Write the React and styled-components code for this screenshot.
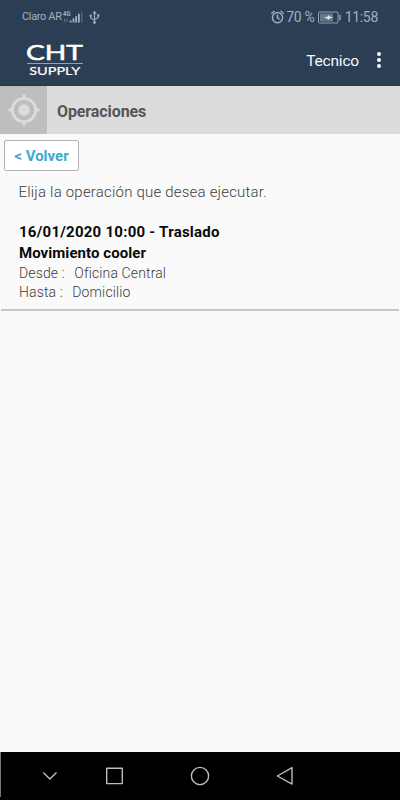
import React from 'react';
import styled, { createGlobalStyle } from 'styled-components';

const GlobalStyle = createGlobalStyle`
  * {
    box-sizing: border-box;
  }

  body {
    margin: 0;
    background: #fafafa;
    font-family: Roboto, sans-serif;
  }
`;

const Screen = styled.div`
  display: flex;
  flex-direction: column;
  width: 400px;
  height: 800px;
  overflow: hidden;
  background: #fafafa;
`;

const Header = styled.header`
  height: 86px;
  background: #2c3e54;
  border-bottom: 1px solid #24344a;
`;

const StatusBar = styled.div`
  display: flex;
  justify-content: space-between;
  height: 34px;
  padding: 0 22px;
  color: #a3b0be;
`;

const StatusGroup = styled.div`
  display: flex;
  align-items: center;
`;

const StatusText = styled.span`
  font-size: ${({ size }) => size}px;
  line-height: 34px;
  letter-spacing: ${({ spacing }) => spacing || 0}px;
  margin-left: ${({ gap }) => gap || 0}px;
  white-space: nowrap;
`;

const Toolbar = styled.div`
  display: flex;
  align-items: center;
  justify-content: space-between;
  height: 52px;
  padding: 0 17px 0 26px;
`;

const ToolbarActions = styled.div`
  display: flex;
  align-items: center;
`;

const UserName = styled.span`
  color: #f5f8fb;
  font-size: 15.5px;
  line-height: 20px;
  letter-spacing: -0.2px;
  padding-top: 1px;
  margin-right: 16px;
`;

const TitleBar = styled.div`
  display: flex;
  align-items: center;
  height: 48px;
  background: #dcdcdc;
`;

const TitleIcon = styled.div`
  display: flex;
  align-items: center;
  justify-content: center;
  width: 47px;
  height: 48px;
  background: #bebebe;
`;

const Title = styled.h1`
  margin: 2px 0 0 10px;
  color: #555;
  font-size: 16px;
  font-weight: 700;
  letter-spacing: -0.1px;
`;

const Main = styled.main`
  flex: 1;
  padding-top: 6px;
`;

const BackButton = styled.button`
  display: block;
  width: 75px;
  height: 31px;
  margin-left: 4px;
  padding: 1px 0 0;
  border: 1px solid #b2b2b6;
  border-radius: 2px;
  background: #fff;
  color: #3ea9cc;
  font-family: inherit;
  font-size: 15px;
  font-weight: 700;
  white-space: nowrap;
`;

const Intro = styled.p`
  margin: 11px 0 0 18.5px;
  color: #3c3c3c;
  font-size: 15px;
  font-weight: 300;
  line-height: 20px;
  letter-spacing: 0.2px;
`;

const Operation = styled.article`
  height: 109px;
  margin: 0 1px;
  padding: 20px 0 0 18px;
  border-bottom: 2px solid #c6c6d0;
`;

const OperationTitle = styled.h2`
  margin: 0;
  color: #0a0a0a;
  font-size: 15px;
  font-weight: 700;
  line-height: 21px;
  letter-spacing: ${({ spacing }) => spacing}px;
`;

const OperationDetail = styled.div`
  color: #3c3c3c;
  font-size: 14px;
  font-weight: 300;
  line-height: 19px;
  letter-spacing: 0.13px;
`;

const DetailValue = styled.span`
  margin-left: 9.5px;
`;

const NavBar = styled.nav`
  height: 48px;
  background: #000;
`;

const LogoDrawing = styled.svg`
  overflow: visible;
`;

const SignalIcon = () => (
  <svg width='22' height='16' viewBox='0 0 22 16' fill='#a3b0be'>
    <text
      x='1'
      y='7'
      fontSize='8'
      fontWeight='700'
      fontFamily='Roboto'
      textLength='7.4'
      lengthAdjust='spacingAndGlyphs'
    >
      4G
    </text>
    <path d='M2.5 9.5V13M5 9.5V13' stroke='#64758a' strokeWidth='1' />
    <path d='M7.7 11.6h1.8v2H7.7zM10.6 9.6h1.8v4h-1.8zM13.3 7.3h1.8v6.3h-1.8zM16 4.8h1.8v8.8H16z' />
    <path d='M19 2.4h1.5v11.2H19z' fill='#52657b' />
  </svg>
);

const UsbIcon = styled(({ className }) => (
  <svg
    className={className}
    width='11'
    height='15'
    viewBox='0 0 11 15'
    fill='none'
    stroke='#a3b0be'
    strokeWidth='1.1'
  >
    <path d='M5.5 3v9M1.8 6v2.2l3.7 2.2M9.2 5.5v2.2L5.5 9.6' />
    <path d='M5.5 0.6L7.5 3.7h-4z' fill='#a3b0be' stroke='none' />
    <circle cx='5.5' cy='12.6' r='1.4' fill='#a3b0be' stroke='none' />
    <circle cx='1.8' cy='5.7' r='1.2' fill='#a3b0be' stroke='none' />
    <path d='M8.1 4.3h2.2v2.2H8.1z' fill='#a3b0be' stroke='none' />
  </svg>
))`
  margin-left: 5px;
`;

const AlarmIcon = () => (
  <svg
    width='13'
    height='14'
    viewBox='0 0 13 14'
    fill='none'
    stroke='#a3b0be'
    strokeWidth='1.4'
    strokeLinecap='round'
  >
    <circle cx='6.5' cy='7.6' r='5.1' />
    <path d='M6.5 4.9v3l1.8 1.1M0.8 3.2L3 1.3M12.2 3.2L10 1.3' />
  </svg>
);

const BatteryIcon = styled(({ className }) => (
  <svg className={className} width='24' height='13' viewBox='0 0 24 13'>
    <rect x='0.5' y='1' width='19.5' height='11' rx='1' fill='none' stroke='#94a2b1' />
    <path d='M2 2.5h13v8H2z' fill='#66778a' />
    <path d='M5.5 6.4l4-.6.6-1.8 2.2 1.8 3 .6-3.8 1.1-.7 1.6-1.7-1.6z' fill='#e0e6eb' />
    <path d='M22 3.7v5.6' stroke='#a3b0be' strokeWidth='1.3' />
  </svg>
))`
  margin-left: 3px;
`;

const Logo = () => (
  <LogoDrawing width='58' height='40' viewBox='0 0 58 40' fill='#fff' stroke='#fff'>
    <text
      x='0'
      y='20.2'
      fontFamily='Lato, sans-serif'
      fontSize='20.4'
      strokeWidth='0.5'
      textLength='57'
      lengthAdjust='spacingAndGlyphs'
    >
      CHT
    </text>
    <path d='M1 23.5h56' stroke='#8ca6b5' strokeWidth='1' />
    <text
      x='3.2'
      y='34.5'
      fontFamily='Lato, sans-serif'
      fontSize='12.2'
      strokeWidth='0.2'
      textLength='51'
      lengthAdjust='spacingAndGlyphs'
    >
      SUPPLY
    </text>
  </LogoDrawing>
);

const MoreIcon = () => (
  <svg width='8' height='18' viewBox='0 0 8 18' fill='#fff'>
    <circle cx='4' cy='3' r='2' />
    <circle cx='4' cy='9' r='2' />
    <circle cx='4' cy='15' r='2' />
  </svg>
);

const TargetIcon = () => (
  <svg width='32' height='32' viewBox='0 0 32 32' fill='none' stroke='#dcdcdc'>
    <circle cx='16' cy='16' r='11.7' strokeWidth='2.8' />
    <circle cx='16' cy='16' r='5.8' fill='#dcdcdc' stroke='none' />
    <path d='M16 0.5v4M16 27.5v4M0.5 16h4M27.5 16h4' strokeWidth='3' />
  </svg>
);

const NavIcons = () => (
  <svg
    width='400'
    height='48'
    viewBox='0 0 400 48'
    fill='none'
    stroke='#bdbdbd'
    strokeWidth='1.4'
    strokeLinejoin='round'
  >
    <path d='M0.5 0v45' stroke='#777' strokeWidth='1' />
    <path d='M43.3 20.5l6.6 6.5 6.6-6.5' />
    <rect x='106.7' y='16.2' width='15.6' height='15.4' />
    <circle cx='200' cy='24' r='8.6' />
    <path d='M277.4 24l14.6-8.3v16.4z' />
  </svg>
);

const operation = {
  date: '16/01/2020 10:00',
  type: 'Traslado',
  description: 'Movimiento cooler',
  from: 'Oficina Central',
  to: 'Domicilio',
};

const App = () => {
  const { date, type, description, from, to } = operation;

  return (
    <>
      <GlobalStyle />
      <Screen>
        <Header>
          <StatusBar>
            <StatusGroup>
              <StatusText size={11} spacing={-0.35}>
                Claro AR
              </StatusText>
              <SignalIcon />
              <UsbIcon />
            </StatusGroup>
            <StatusGroup>
              <AlarmIcon />
              <StatusText size={14} gap={2} spacing={-0.25}>
                70 %
              </StatusText>
              <BatteryIcon />
              <StatusText size={14} gap={3} spacing={-0.3}>
                11:58
              </StatusText>
            </StatusGroup>
          </StatusBar>
          <Toolbar>
            <Logo />
            <ToolbarActions>
              <UserName>Tecnico</UserName>
              <MoreIcon />
            </ToolbarActions>
          </Toolbar>
        </Header>
        <TitleBar>
          <TitleIcon>
            <TargetIcon />
          </TitleIcon>
          <Title>Operaciones</Title>
        </TitleBar>
        <Main>
          <BackButton>&lt; Volver</BackButton>
          <Intro>Elija la operación que desea ejecutar.</Intro>
          <Operation>
            <OperationTitle spacing={0.25}>
              {date} - {type}
            </OperationTitle>
            <OperationTitle spacing={0.06}>{description}</OperationTitle>
            <OperationDetail>
              Desde :<DetailValue>{from}</DetailValue>
            </OperationDetail>
            <OperationDetail>
              Hasta :<DetailValue>{to}</DetailValue>
            </OperationDetail>
          </Operation>
        </Main>
        <NavBar>
          <NavIcons />
        </NavBar>
      </Screen>
    </>
  );
};

export default App;
